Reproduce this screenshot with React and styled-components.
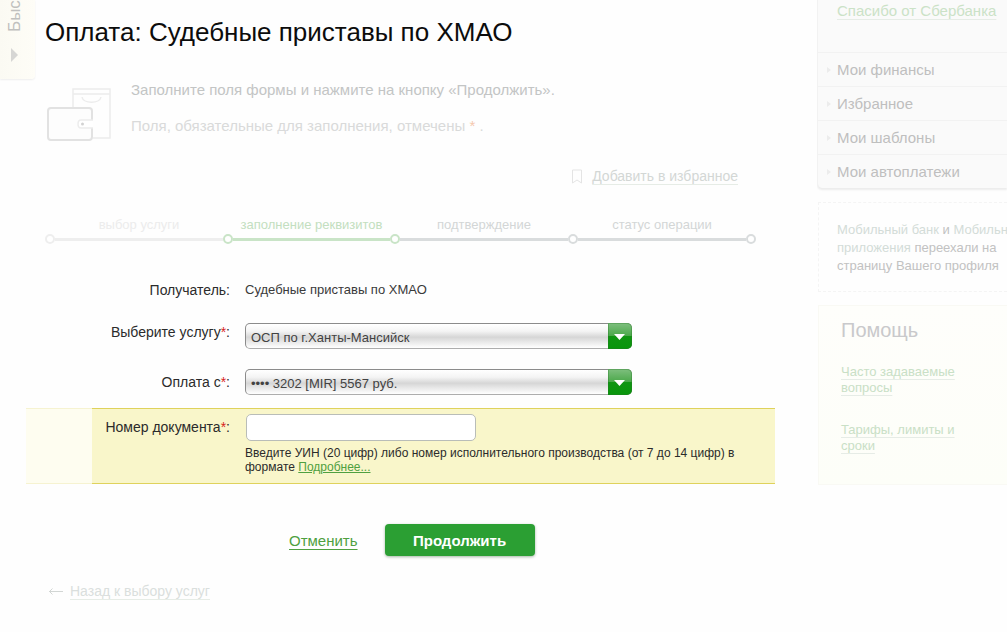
import React from "react";
import styled, { createGlobalStyle } from "styled-components";

const GlobalStyle = createGlobalStyle`
  *, *::before, *::after { box-sizing: border-box; }
  body {
    margin: 0;
    background: #fefefe;
    color: #2b2b2b;
    font-family: "Liberation Sans", Arial, sans-serif;
    font-size: 14px;
    overflow-x: hidden;
  }
  h1, h2, p { margin: 0; font-weight: normal; }
`;

const Page = styled.div`
  display: grid;
  grid-template-columns: 26px minmax(0, 1fr) 190px;
  align-items: start;
`;

const QuickTab = styled.button`
  display: flex;
  flex-direction: column;
  align-items: center;
  gap: 16px;
  width: 35px;
  height: 79px;
  padding: 0 6px 0 0;
  border: 0;
  border-radius: 0 0 4px 0;
  background: linear-gradient(90deg, #fbfaf3, #fefdf7);
  box-shadow: 0 1px 2px #eeeeee;
  color: #c0c0be;
  font: 17px/20px "Liberation Sans", Arial, sans-serif;
`;

const QuickLabel = styled.span`
  height: 32px;
  writing-mode: vertical-rl;
  transform: rotate(180deg);
`;

const Main = styled.main`
  padding: 16px 0 28px;
  margin-right: 42px;
`;

const Title = styled.h1`
  padding-left: 19px;
  color: #0c0c0c;
  font-size: 26px;
  line-height: 32px;
`;

const Intro = styled.div`
  display: flex;
  gap: 20px;
  margin-top: 24px;
  padding-left: 20px;
  line-height: 36px;
  font-size: 15px;
`;

const WalletSvg = styled.svg`
  flex: none;
  margin-top: 15px;
`;

const IntroText = styled.p`
  color: ${(p) => (p.$faint ? "#d9dada" : "#c3c5c5")};
`;

const Required = styled.span`
  color: ${(p) => (p.$faint ? "#f5c9ae" : "#d8231f")};
`;

const Favorite = styled.div`
  display: flex;
  justify-content: flex-end;
  align-items: center;
  gap: 9px;
  margin: 22px 37px 0 0;
`;

const FadedLink = styled.a`
  color: ${(p) => p.$color || "#d3d7d5"};
  font-size: ${(p) => p.$size || 14}px;
  line-height: ${(p) => p.$line || 20}px;
  text-decoration: ${(p) => (p.$plain ? "none" : "underline")};
  text-decoration-color: #e6ece6;
  text-decoration-thickness: 1px;
  text-underline-offset: 3px;
`;

const Steps = styled.ol`
  display: flex;
  list-style: none;
  margin: 31px 24px 0;
  padding: 0;
`;

const tones = {
  past: { line: "#eeeeee", text: "#ececec" },
  active: { line: "#c9e4c7", text: "#c3dfc0" },
  next: { line: "#d9dcdd", text: "#d3d6d6" },
};

const Step = styled.li`
  flex: ${(p) => p.$grow} 1 0;
  color: ${(p) => tones[p.$tone].text};
  font-size: 13px;
  line-height: 16px;
  text-align: center;
`;

const Track = styled.div`
  display: flex;
  align-items: center;
  margin: 1px -5px 0;
`;

const Dot = styled.span`
  flex: none;
  width: 10px;
  height: 10px;
  border: 2px solid ${(p) => tones[p.$tone].line};
  border-radius: 50%;
  background: #ffffff;
`;

const Bar = styled.span`
  flex: 1;
  height: 3px;
  margin-right: ${(p) => (p.$last ? 0 : 10)}px;
  background: ${(p) => tones[p.$tone].line};
`;

const Form = styled.form`
  margin-top: 36px;
`;

const Row = styled.div`
  display: grid;
  grid-template-columns: 204px minmax(0, 1fr);
  column-gap: 15px;
  align-items: ${(p) => (p.$top ? "start" : "center")};
  margin-top: ${(p) => p.$gap || 0}px;
`;

const HighlightRow = styled(Row)`
  position: relative;
  align-items: start;
  margin-top: 13px;
  padding: 5px 0 9px;
  border: 1px solid #dfd25c;
  border-width: 1px 0;
  background: #f9f6ca;

  &::before {
    content: "";
    position: absolute;
    top: -1px;
    bottom: -1px;
    left: 0;
    width: 66px;
    background: rgba(255, 255, 255, 0.72);
  }
`;

const Label = styled.label`
  font-size: 14px;
  line-height: ${(p) => p.$line || 18}px;
  text-align: right;
`;

const Value = styled.output`
  font-size: 13px;
  line-height: 20px;
  color: #3a3a3a;
`;

const SelectBox = styled.div`
  position: relative;
  width: 387px;
  max-width: 100%;
  height: 26px;
`;

const Select = styled.select`
  display: block;
  appearance: none;
  width: 100%;
  height: 26px;
  padding: 2px 30px 0 5px;
  border: 1px solid #8b8b8b;
  border-bottom-color: #adadad;
  border-radius: 5px;
  background: linear-gradient(#ffffff 0%, #f4f4f4 30%, #d6d6d6 55%, #e4e4e4 70%, #ffffff 100%);
  color: #424242;
  font: 13px "Liberation Sans", Arial, sans-serif;
`;

const SelectArrow = styled.span`
  position: absolute;
  top: 0;
  right: 0;
  display: grid;
  place-items: center;
  width: 24px;
  height: 26px;
  padding-top: 2px;
  border-radius: 0 5px 5px 0;
  background: linear-gradient(#7fbf7f 0%, #4da94c 48%, #109512 52%, #08960b 100%);
  box-shadow: inset 0 0 0 1px rgba(40, 120, 40, 0.35);
  pointer-events: none;
`;

const Field = styled.div`
  display: flex;
  flex-direction: column;
  gap: 5px;
`;

const TextInput = styled.input`
  width: 230px;
  height: 27px;
  margin-left: 1px;
  padding: 0 6px;
  border: 1px solid #b9bdb8;
  border-radius: 5px;
  background: #ffffff;
  font: 13px "Liberation Sans", Arial, sans-serif;
`;

const Hint = styled.p`
  padding-right: 30px;
  font-size: 12px;
  line-height: 14px;
`;

const GreenLink = styled.a`
  color: #4fa040;
  font-size: ${(p) => p.$size}px;
  text-underline-offset: ${(p) => p.$offset || 1}px;
  text-decoration-thickness: 1px;
`;

const Actions = styled.div`
  display: flex;
  align-items: center;
  gap: 27px;
  margin-top: 40px;
  padding-left: 263px;
`;

const Submit = styled.button`
  width: 150px;
  height: 32px;
  border: 0;
  border-radius: 4px;
  background: #2b9f33;
  box-shadow: 0 1px 3px #a5b5a5;
  color: #ffffff;
  font: bold 15px "Liberation Sans", Arial, sans-serif;
`;

const Back = styled.div`
  display: flex;
  align-items: center;
  gap: 7px;
  margin-top: 25px;
  padding-left: 22px;
`;

const Sidebar = styled.aside`
  overflow: hidden;
`;

const Menu = styled.nav`
  margin-bottom: 14px;
  border-left: 1px solid #f2f2f2;
  border-radius: 0 0 0 5px;
  background: #fafafa;
  box-shadow: 0 2px 2px #ececec;
`;

const MenuTop = styled.div`
  height: 52px;
  padding: 1px 0 0 19px;
  white-space: nowrap;
`;

const MenuItem = styled.a`
  display: flex;
  align-items: center;
  gap: 6px;
  height: 34px;
  padding-left: 9px;
  border-top: 1px solid #f2f2f2;
  color: #bfbfbf;
  font-size: 15px;
  text-decoration: none;
`;

const Notice = styled.p`
  margin-bottom: 13px;
  margin-left: 1px;
  padding: 18px 0 16px 18px;
  border: 1px dashed #f4f4f4;
  border-right: 0;
  color: #c2c2c2;
  font-size: 13px;
  line-height: 18px;
  white-space: nowrap;
`;

const Help = styled.section`
  height: 180px;
  margin-left: 1px;
  padding: 12px 40px 0 22px;
  border: 1px solid #f9f9f4;
  border-right: 0;
  background: linear-gradient(#fefefb, #fdfef8);
`;

const HelpTitle = styled.h2`
  margin-bottom: 22px;
  color: #c9c9cb;
  font-size: 20px;
  line-height: 24px;
`;

const HelpLink = styled(FadedLink)`
  display: block;
  margin-bottom: 26px;
`;

function Wallet() {
  return (
    <WalletSvg width="65" height="55" viewBox="0 0 65 55" fill="none" stroke="#ececec" aria-hidden="true">
      <path d="M27 20V2h37v49H47" strokeWidth="1.5" />
      <path d="M27 7h37M36 10c1 7 18 7 19 0" strokeWidth="1.5" />
      <rect x="2" y="21" width="44" height="32" rx="3" strokeWidth="2" stroke="#e2e2e2" fill="#fdfdfd" />
      <path d="M47 33H35q-3 0-3 4t3 4h12" strokeWidth="1.5" fill="#ffffff" />
      <circle cx="36.500" cy="37" r="1.500" fill="#d2d2d2" stroke="none" />
    </WalletSvg>
  );
}

const STEPS = [
  ["выбор услуги", "past", 178],
  ["заполнение реквизитов", "active", 167],
  ["подтверждение", "next", 178],
  ["статус операции", "next", 178],
];

const DOT_TONES = ["past", "active", "active", "next"];

const MENU = ["Мои финансы", "Избранное", "Мои шаблоны", "Мои автоплатежи"];

function Dropdown({ id, text }) {
  return (
    <SelectBox>
      <Select id={id}>
        <option>{text}</option>
      </Select>
      <SelectArrow>
        <svg width="12" height="7" viewBox="0 0 12 7" aria-hidden="true">
          <path d="M0 0h11L5.500 6z" fill="#ffffff" />
        </svg>
      </SelectArrow>
    </SelectBox>
  );
}

export default function App() {
  return (
    <>
      <GlobalStyle />
      <Page>
        <QuickTab type="button">
          <QuickLabel>Быс</QuickLabel>
          <svg width="8" height="14" viewBox="0 0 8 14" aria-hidden="true">
            <path d="M0 0l7 7-7 7z" fill="#d6d6d4" />
          </svg>
        </QuickTab>

        <Main>
          <Title>Оплата: Судебные приставы по ХМАО</Title>
          <Intro>
            <Wallet />
            <div>
              <IntroText>Заполните поля формы и нажмите на кнопку «Продолжить».</IntroText>
              <IntroText $faint>
                Поля, обязательные для заполнения, отмечены <Required $faint>*</Required> .
              </IntroText>
            </div>
          </Intro>

          <Favorite>
            <svg width="12" height="15" viewBox="0 0 12 15" fill="none" stroke="#e4e4e4" aria-hidden="true">
              <path d="M1.500 1h9v13L6 11l-4.500 3z" />
            </svg>
            <FadedLink href="#">Добавить в избранное</FadedLink>
          </Favorite>

          <Steps>
            {STEPS.map(([name, tone, grow], i) => {
              const last = i === STEPS.length - 1;
              return (
                <Step key={name} $tone={tone} $grow={grow}>
                  {name}
                  <Track>
                    <Dot $tone={DOT_TONES[i]} />
                    <Bar $tone={tone} $last={last} />
                    {last && <Dot $tone="next" />}
                  </Track>
                </Step>
              );
            })}
          </Steps>

          <Form onSubmit={(e) => e.preventDefault()}>
            <Row>
              <Label htmlFor="payee">Получатель:</Label>
              <Value id="payee">Судебные приставы по ХМАО</Value>
            </Row>
            <Row $top $gap={23}>
              <Label htmlFor="service">
                Выберите услугу<Required>*</Required>:
              </Label>
              <Dropdown id="service" text="ОСП по г.Ханты-Мансийск" />
            </Row>
            <Row $gap={20}>
              <Label htmlFor="source">
                Оплата с<Required>*</Required>:
              </Label>
              <Dropdown id="source" text="•••• 3202 [MIR] 5567 руб." />
            </Row>
            <HighlightRow>
              <Label htmlFor="document" $line={27}>
                Номер документа<Required>*</Required>:
              </Label>
              <Field>
                <TextInput id="document" type="text" />
                <Hint>
                  Введите УИН (20 цифр) либо номер исполнительного производства (от 7 до 14 цифр) в формате{" "}
                  <GreenLink href="#" $size={12}>Подробнее...</GreenLink>
                </Hint>
              </Field>
            </HighlightRow>
            <Actions>
              <GreenLink href="#" $size={15} $offset={3}>Отменить</GreenLink>
              <Submit type="submit">Продолжить</Submit>
            </Actions>
          </Form>

          <Back>
            <svg width="15" height="8" viewBox="0 0 15 8" fill="none" stroke="#d2d6d4" aria-hidden="true">
              <path d="M1 4.500h14M4.500 1.500l-3 3 3 3" />
            </svg>
            <FadedLink href="#" $color="#dadfdd">Назад к выбору услуг</FadedLink>
          </Back>
        </Main>

        <Sidebar>
          <Menu>
            <MenuTop>
              <FadedLink href="#" $size={15} $color="#cbe2c7">Спасибо от Сбербанка</FadedLink>
            </MenuTop>
            {MENU.map((name) => (
              <MenuItem key={name} href="#">
                <svg width="4" height="6" viewBox="0 0 4 6" aria-hidden="true">
                  <path d="M0 0l4 3-4 3z" fill="#ececec" />
                </svg>
                {name}
              </MenuItem>
            ))}
          </Menu>
          <Notice>
            <FadedLink href="#" $size={13} $line={18} $color="#d3dcd8" $plain>Мобильный банк</FadedLink> и{" "}
            <FadedLink href="#" $size={13} $line={18} $color="#d3dcd8" $plain>
              Мобильные
              <br />
              приложения
            </FadedLink>{" "}
            переехали на
            <br />
            страницу Вашего профиля
          </Notice>
          <Help>
            <HelpTitle>Помощь</HelpTitle>
            <HelpLink href="#" $size={13} $line={16} $color="#c9e0c6">Часто задаваемые вопросы</HelpLink>
            <HelpLink href="#" $size={13} $line={16} $color="#c9e0c6">Тарифы, лимиты и сроки</HelpLink>
          </Help>
        </Sidebar>
      </Page>
    </>
  );
}
